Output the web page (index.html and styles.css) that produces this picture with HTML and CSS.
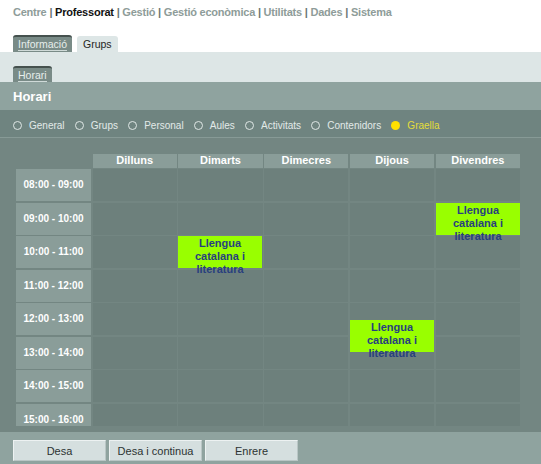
FILE: index.html
```
<!DOCTYPE html>
<html lang="ca">
<head>
<meta charset="utf-8">
<title>Horari</title>
<link rel="stylesheet" href="styles.css">
</head>
<body>
<div class="topnav">
  <span class="nav-item">Centre</span> <span class="sep">|</span>
  <span class="nav-item current">Professorat</span> <span class="sep">|</span>
  <span class="nav-item">Gestió</span> <span class="sep">|</span>
  <span class="nav-item">Gestió econòmica</span> <span class="sep">|</span>
  <span class="nav-item">Utilitats</span> <span class="sep">|</span>
  <span class="nav-item">Dades</span> <span class="sep">|</span>
  <span class="nav-item">Sistema</span>
</div>
<div class="tabs">
  <div class="tab tab-dark"><span class="tab-label">Informació</span></div>
  <div class="tab tab-light"><span class="tab-label">Grups</span></div>
</div>
<div class="subband">
  <div class="tab tab-dark tab-sub"><span class="tab-label">Horari</span></div>
</div>
<div class="title-band">Horari</div>
<div class="radios">
  <div class="radio"><span class="dot"></span>General</div>
  <div class="radio"><span class="dot"></span>Grups</div>
  <div class="radio"><span class="dot"></span>Personal</div>
  <div class="radio"><span class="dot"></span>Aules</div>
  <div class="radio"><span class="dot"></span>Activitats</div>
  <div class="radio"><span class="dot"></span>Contenidors</div>
  <div class="radio selected"><span class="dot"></span>Graella</div>
</div>
<div class="main">
  <div class="scroller">
    <div class="schedule">
      <div class="corner"></div>
      <div class="day">Dilluns</div>
      <div class="day">Dimarts</div>
      <div class="day">Dimecres</div>
      <div class="day">Dijous</div>
      <div class="day">Divendres</div>

      <div class="time">08:00 - 09:00</div>
      <div class="cell"></div><div class="cell"></div><div class="cell"></div><div class="cell"></div><div class="cell"></div>
      <div class="time">09:00 - 10:00</div>
      <div class="cell"></div><div class="cell"></div><div class="cell"></div><div class="cell"></div><div class="cell"></div>
      <div class="time">10:00 - 11:00</div>
      <div class="cell"></div><div class="cell"></div><div class="cell"></div><div class="cell"></div><div class="cell"></div>
      <div class="time">11:00 - 12:00</div>
      <div class="cell"></div><div class="cell"></div><div class="cell"></div><div class="cell"></div><div class="cell"></div>
      <div class="time">12:00 - 13:00</div>
      <div class="cell"></div><div class="cell"></div><div class="cell"></div><div class="cell"></div><div class="cell"></div>
      <div class="time">13:00 - 14:00</div>
      <div class="cell"></div><div class="cell"></div><div class="cell"></div><div class="cell"></div><div class="cell"></div>
      <div class="time">14:00 - 15:00</div>
      <div class="cell"></div><div class="cell"></div><div class="cell"></div><div class="cell"></div><div class="cell"></div>
      <div class="time">15:00 - 16:00</div>
      <div class="cell"></div><div class="cell"></div><div class="cell"></div><div class="cell"></div><div class="cell"></div>

      <div class="event" style="left:162px; top:82px;">Llengua catalana i literatura</div>
      <div class="event" style="left:420px; top:48.5px;">Llengua catalana i literatura</div>
      <div class="event" style="left:334px; top:166px;">Llengua catalana i literatura</div>
    </div>
  </div>
</div>
<div class="footer">
  <button class="btn">Desa</button>
  <button class="btn">Desa i continua</button>
  <button class="btn">Enrere</button>
</div>
</body>
</html>
```

FILE: styles.css
```
html, body {
  margin: 0;
  padding: 0;
}
body {
  width: 541px;
  height: 464px;
  overflow: hidden;
  background: #ffffff;
  font-family: "Liberation Sans", Arial, sans-serif;
}

.topnav {
  height: 35px;
  box-sizing: border-box;
  padding: 5px 0 0 13px;
  font-size: 11px;
  font-weight: bold;
  letter-spacing: -0.22px;
  color: #8e9c99;
  line-height: 14px;
  white-space: nowrap;
}
.topnav .sep {
  color: #6a7674;
}
.topnav .current {
  color: #111111;
}

.tabs {
  display: flex;
  align-items: flex-end;
  gap: 5px;
  padding-left: 13px;
  height: 17px;
}
.tab {
  box-sizing: border-box;
  border-radius: 3px 3px 0 0;
  font-size: 10.5px;
  line-height: 13px;
  padding: 0 5px;
}
.tab-dark {
  height: 17px;
  background: #798b87;
  border-top: 2px solid #45514e;
  color: #e6eeec;
  padding-top: 1px;
}
.tab-dark .tab-label {
  display: inline-block;
  border-bottom: 1px solid #cfdad8;
  line-height: 12px;
}
.tab-light {
  height: 16px;
  background: #dde6e6;
  color: #1f2524;
  padding: 2px 6px 0;
}

.subband {
  height: 30px;
  background: #dde6e6;
  box-sizing: border-box;
  padding: 14px 0 0 13px;
  display: flex;
  align-items: flex-end;
}
.tab-sub {
  height: 16px;
}

.title-band {
  height: 28px;
  box-sizing: border-box;
  background: #8fa39f;
  color: #ffffff;
  font-weight: bold;
  font-size: 13px;
  line-height: 16px;
  padding: 7px 0 0 13px;
}

.radios {
  height: 28px;
  box-sizing: border-box;
  background: #6f8480;
  border-bottom: 1px solid #879a96;
  display: flex;
  align-items: center;
  padding: 4px 0 0 13px;
  font-size: 10px;
  color: #e2eae8;
}
.radio {
  display: flex;
  align-items: center;
  margin-right: 10.2px;
}
.dot {
  width: 7px;
  height: 7px;
  border: 1px solid #dfe7e5;
  border-radius: 50%;
  margin-right: 7px;
}
.radio.selected {
  color: #e4dd3a;
}
.radio.selected .dot {
  width: 9px;
  height: 9px;
  border: none;
  background: #ffe000;
}

.main {
  background: #738682;
  padding-bottom: 6px;
}
.scroller {
  height: 288px;
  box-sizing: border-box;
  overflow: hidden;
  padding: 16px 0 0 16px;
}
.schedule {
  position: relative;
  display: grid;
  grid-template-columns: 75px repeat(5, 84.2px);
  grid-template-rows: 13.5px repeat(8, 32px);
  column-gap: 1.6px;
  row-gap: 1.5px;
}
.day {
  background: #8a9d99;
  color: #ffffff;
  font-weight: bold;
  font-size: 11px;
  line-height: 13.5px;
  text-align: center;
}
.time {
  background: #8a9d99;
  color: #ffffff;
  font-weight: bold;
  font-size: 10px;
  line-height: 32px;
  text-align: center;
}
.cell {
  background: #6d807c;
}
.event {
  position: absolute;
  width: 84px;
  height: 32px;
  box-sizing: border-box;
  background: #99ff00;
  color: #283f7e;
  font-weight: bold;
  font-size: 11px;
  line-height: 13px;
  text-align: center;
  padding: 1px 8px 0;
}

.footer {
  height: 32px;
  box-sizing: border-box;
  background: #8fa39f;
  display: flex;
  gap: 3px;
  padding: 8px 0 0 13px;
}
.btn {
  width: 93px;
  height: 21px;
  margin: 0;
  padding: 0;
  background: #d5dfdf;
  border: 1px solid #edf2f2;
  border-right-color: #b9c6c5;
  border-bottom-color: #b9c6c5;
  font-family: "Liberation Sans", Arial, sans-serif;
  font-size: 11px;
  color: #2c3332;
}
```
